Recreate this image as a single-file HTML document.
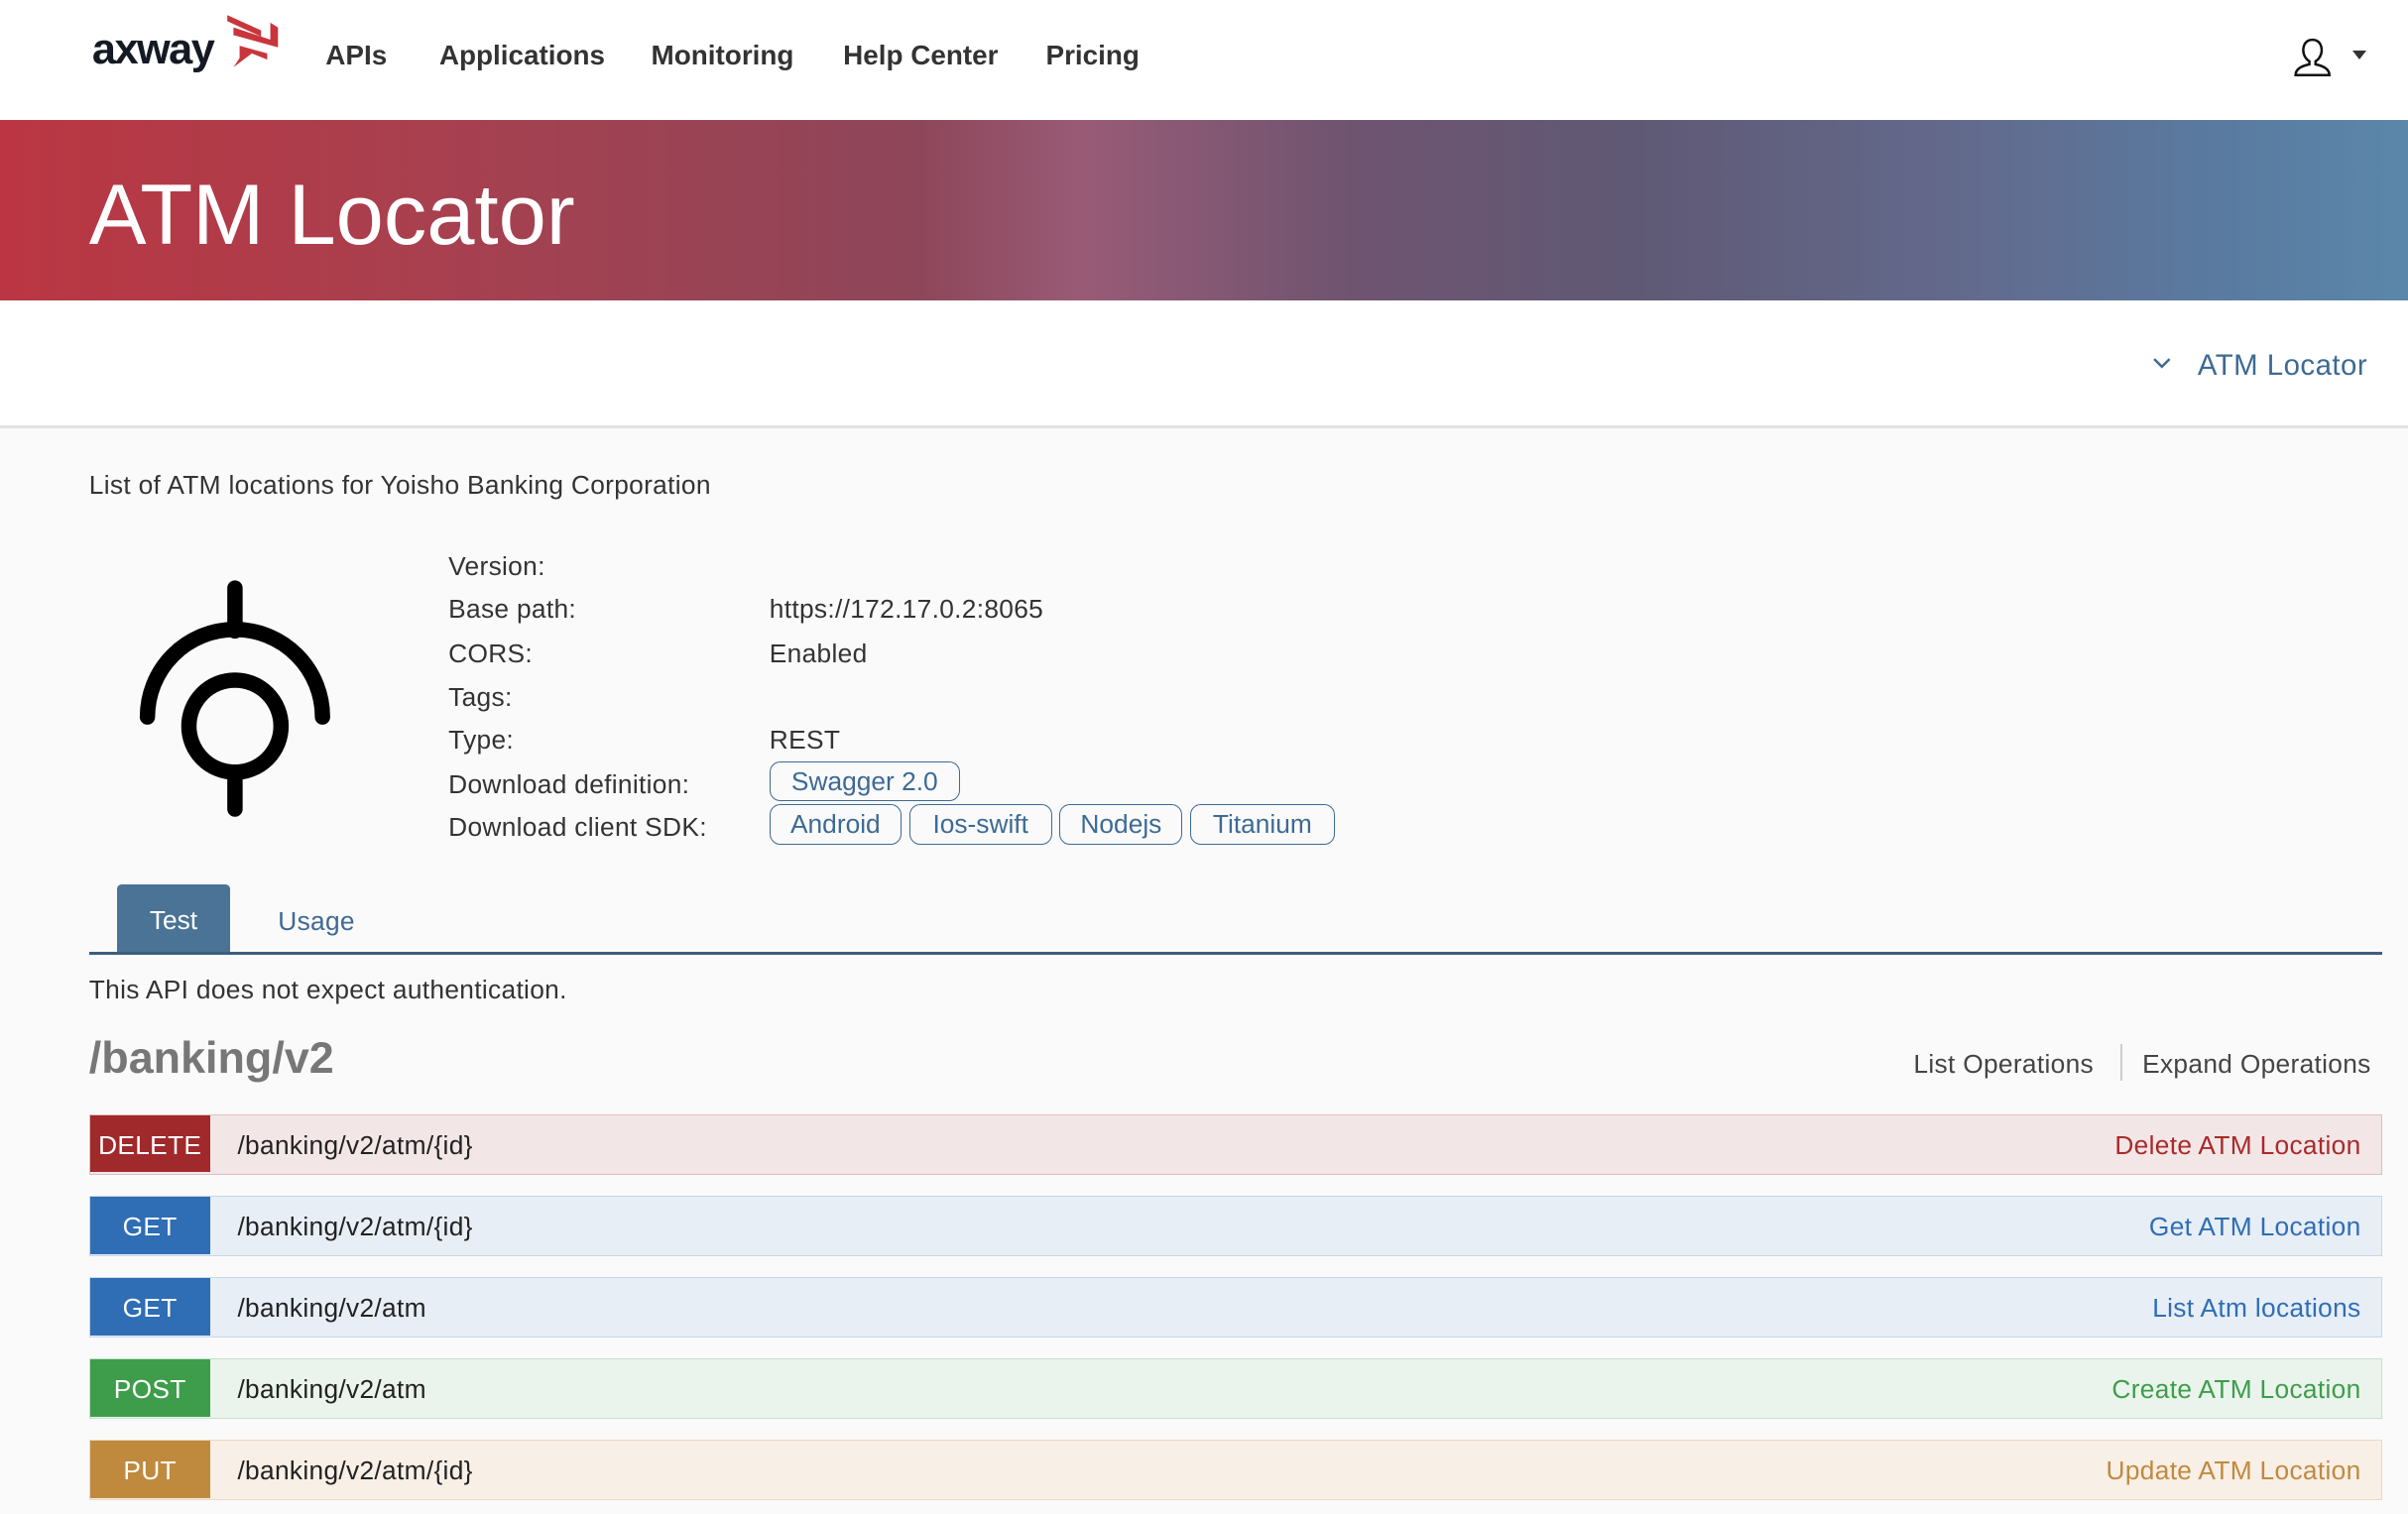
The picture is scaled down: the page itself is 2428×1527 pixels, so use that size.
<!DOCTYPE html>
<html><head><meta charset="utf-8">
<style>
html,body{margin:0;padding:0;}
body{width:1568px;height:986px;overflow:hidden;zoom:1.54847;font-family:"Liberation Sans",sans-serif;background:#fafafa;color:#333;position:relative;}
.abs{position:absolute;}
.nav{position:absolute;left:0;top:0;width:1568px;height:78px;background:#fff;}
.nav a{position:absolute;top:26px;font-size:18px;font-weight:bold;color:#333;}
.banner{position:absolute;left:0;top:78px;width:1568px;height:118px;
background:linear-gradient(90deg,#bb3642 0%,#a8404f 18%,#8e4659 38%,#985b76 45%,#6f5470 56%,#5f5975 68%,#63688a 80%,#5a7aa0 92%,#5b87aa 100%);}
.banner h1{position:absolute;left:58px;top:31px;margin:0;font-weight:normal;font-size:56px;color:#fff;line-height:62px;}
.sub{position:absolute;left:0;top:196px;width:1568px;height:81px;background:#fff;border-bottom:2px solid #e2e2e2;}
.t17{font-size:17px;line-height:20px;letter-spacing:0.2px;}
.lbl{position:absolute;left:292px;}
.val{position:absolute;left:501px;}
.btn{position:absolute;top:524px;height:26px;border:1px solid #3d6a93;border-radius:7px;color:#3d6a93;font-size:17px;line-height:25px;text-align:center;box-sizing:border-box;}
.row{position:absolute;left:58px;width:1493px;height:39px;box-sizing:border-box;border:1px solid;font-size:17px;line-height:40px;letter-spacing:0.2px;}
.m{position:absolute;left:0;top:0;width:78px;height:37px;color:#fff;text-align:center;}
.p{position:absolute;left:96px;color:#222;}
.d{position:absolute;right:13px;}
</style></head><body>
<div class="nav">
 <div class="abs" style="left:60px;top:17px;font-size:28px;font-weight:bold;color:#141a24;letter-spacing:-1px;">axway</div>
 <svg class="abs" style="left:144px;top:6px" width="40" height="40" viewBox="0 0 40 40">
  <polygon points="4,4 26,14 26,18 4,8" fill="#c8363b"/>
  <polygon points="8,12 32,20 32,9 37,12 37,25 8,17" fill="#c8363b"/>
  <polygon points="12,24 30,29 30,33 20,29 8,38 12,32" fill="#c8363b"/>
 </svg>
 <a style="left:212px">APIs</a><a style="left:286px">Applications</a><a style="left:424px">Monitoring</a><a style="left:549px">Help Center</a><a style="left:681px">Pricing</a>
 <svg class="abs" style="left:1492px;top:24px" width="28" height="28" viewBox="0 0 28 28"><path d="M14 2c4 0 6 3 6 7 0 3-2 6-4 7v2c5 1 9 3 9 7H3c0-4 4-6 9-7v-2c-2-1-4-4-4-7 0-4 2-7 6-7z" fill="none" stroke="#111" stroke-width="1.6"/></svg>
 <div class="abs" style="left:1532px;top:33px;width:0;height:0;border-left:5px solid transparent;border-right:5px solid transparent;border-top:6px solid #333;"></div>
</div>
<div class="banner"><h1>ATM Locator</h1></div>
<div class="sub"><svg class="abs" style="left:1401px;top:36px" width="14" height="10"><path d="M2 2l5 5 5-5" fill="none" stroke="#3d6a93" stroke-width="1.6"/></svg><div class="abs" style="left:1431px;top:31px;font-size:19px;color:#3d6a93;letter-spacing:0.3px;">ATM Locator</div></div>
<div class="abs t17" style="left:58px;top:306px;">List of ATM locations for Yoisho Banking Corporation</div>
<svg class="abs" style="left:0;top:0" width="300" height="560" viewBox="0 0 300 560">
 <g fill="none" stroke="#000" stroke-width="10" stroke-linecap="round">
  <line x1="153" y1="383" x2="153" y2="411"/>
  <path d="M96 467A57 57 0 0 1 210 467"/>
  <circle cx="153" cy="473" r="30"/>
  <line x1="153" y1="503" x2="153" y2="527"/>
 </g>
</svg>
<div class="t17 lbl" style="top:359px">Version:</div>
<div class="t17 lbl" style="top:387px">Base path:</div><div class="t17 val" style="top:387px">https://172.17.0.2:8065</div>
<div class="t17 lbl" style="top:416px">CORS:</div><div class="t17 val" style="top:416px">Enabled</div>
<div class="t17 lbl" style="top:444px">Tags:</div>
<div class="t17 lbl" style="top:472px">Type:</div><div class="t17 val" style="top:472px">REST</div>
<div class="t17 lbl" style="top:501px">Download definition:</div>
<div class="t17 lbl" style="top:529px">Download client SDK:</div>
<div class="btn" style="left:501px;top:496px;width:124px;">Swagger 2.0</div>
<div class="btn" style="left:501px;width:86px;">Android</div>
<div class="btn" style="left:592px;width:93px;">Ios-swift</div>
<div class="btn" style="left:690px;width:80px;">Nodejs</div>
<div class="btn" style="left:775px;width:94px;">Titanium</div>
<div class="abs" style="left:76px;top:576px;width:74px;height:45px;background:#4a7395;color:#fff;font-size:17px;line-height:47px;text-align:center;border-radius:3px 3px 0 0;">Test</div>
<div class="abs t17" style="left:181px;top:590px;color:#3d6a93;">Usage</div>
<div class="abs" style="left:58px;top:620px;width:1493px;height:2px;background:#3d5e80;"></div>
<div class="abs t17" style="left:58px;top:635px;">This API does not expect authentication.</div>
<div class="abs" style="left:58px;top:672px;font-size:29px;font-weight:bold;color:#777;">/banking/v2</div>
<div class="abs t17" style="left:1246px;top:683px;color:#444;">List Operations</div>
<div class="abs" style="left:1381px;top:680px;width:1px;height:24px;background:#ccc;"></div>
<div class="abs t17" style="left:1395px;top:683px;color:#444;">Expand Operations</div>
<div class="row" style="top:726px;background:#f3e6e7;border-color:#e2bcbf;"><div class="m" style="background:#a0292b">DELETE</div><div class="p">/banking/v2/atm/{id}</div><div class="d" style="color:#a82a2a">Delete ATM Location</div></div>
<div class="row" style="top:779px;background:#e7eef6;border-color:#c6d7ea;"><div class="m" style="background:#2f6db5">GET</div><div class="p">/banking/v2/atm/{id}</div><div class="d" style="color:#2f6db5">Get ATM Location</div></div>
<div class="row" style="top:832px;background:#e7eef6;border-color:#c6d7ea;"><div class="m" style="background:#2f6db5">GET</div><div class="p">/banking/v2/atm</div><div class="d" style="color:#2f6db5">List Atm locations</div></div>
<div class="row" style="top:885px;background:#eaf4ec;border-color:#c4e1c8;"><div class="m" style="background:#3e9d4a">POST</div><div class="p">/banking/v2/atm</div><div class="d" style="color:#3e9d4a">Create ATM Location</div></div>
<div class="row" style="top:938px;background:#f8efe6;border-color:#ecd8bf;"><div class="m" style="background:#c08a3e">PUT</div><div class="p">/banking/v2/atm/{id}</div><div class="d" style="color:#c08a3e">Update ATM Location</div></div>
</body></html>
